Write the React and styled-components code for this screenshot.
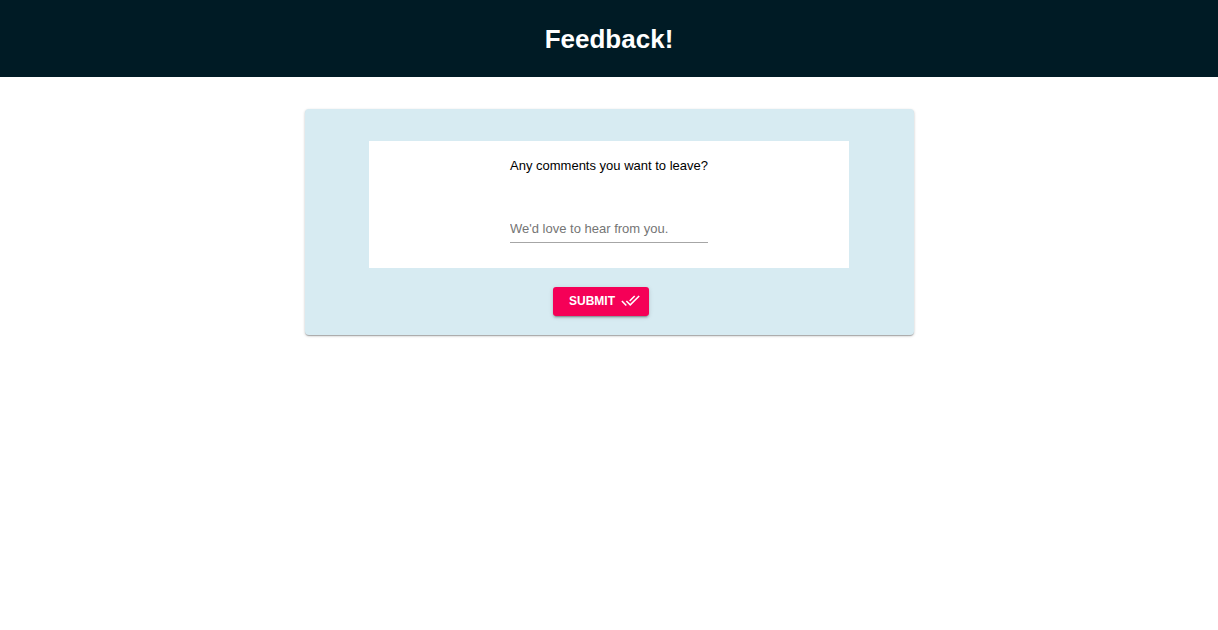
import React from "react";
import styled, { createGlobalStyle } from "styled-components";

const GlobalStyle = createGlobalStyle`
  body {
    margin: 0;
    background: #ffffff;
    color: #000000;
    font-family: "Liberation Sans", Arial, sans-serif;
    font-size: 13px;
  }
`;

const Header = styled.header`
  background: #001b25;
  color: #ffffff;
  padding: 23px 16px 22px;
  text-align: center;
`;

const Title = styled.h1`
  margin: 0;
  font-size: 26px;
  line-height: 32px;
  font-weight: 700;
`;

const Card = styled.form`
  box-sizing: border-box;
  display: flex;
  flex-direction: column;
  align-items: center;
  width: 50%;
  min-width: 280px;
  margin: 32px auto;
  padding: 32px 16px 19px;
  border-radius: 4px;
  background: #d7ebf2;
  box-shadow:
    0 1px 3px rgba(0, 0, 0, 0.2),
    0 1px 1px rgba(0, 0, 0, 0.14),
    0 2px 1px -1px rgba(0, 0, 0, 0.12);
`;

const Panel = styled.div`
  box-sizing: border-box;
  display: flex;
  flex-direction: column;
  align-items: center;
  width: 100%;
  max-width: 480px;
  padding: 16px 16px 25px;
  background: #ffffff;
`;

const Field = styled.div`
  display: flex;
  flex-direction: column;
`;

const Question = styled.label`
  margin-bottom: 40px;
  line-height: 18px;
`;

const CommentInput = styled.input`
  box-sizing: border-box;
  width: 100%;
  height: 28px;
  padding: 4px 0 5px;
  border: 0;
  border-bottom: 1px solid #a6a6a6;
  border-radius: 0;
  outline: 0;
  background: transparent;
  color: inherit;
  font: inherit;

  &::placeholder {
    color: #757575;
    opacity: 1;
  }
`;

const SubmitButton = styled.button`
  display: inline-flex;
  align-items: center;
  justify-content: center;
  gap: 6px;
  height: 29px;
  margin: 19px 16px 0 0;
  padding: 0 9px 2px 16px;
  border: 0;
  border-radius: 3px;
  background: #f50057;
  color: #ffffff;
  font: 700 12px/20px "Liberation Sans", Arial, sans-serif;
  text-transform: uppercase;
  cursor: pointer;
  box-shadow:
    0 3px 1px -2px rgba(0, 0, 0, 0.2),
    0 2px 2px rgba(0, 0, 0, 0.14),
    0 1px 5px rgba(0, 0, 0, 0.12);
`;

const CheckIcon = styled.svg`
  display: block;
  width: 19px;
  height: 19px;
  fill: currentColor;
`;

export default function App() {
  return (
    <>
      <GlobalStyle />
      <Header>
        <Title>Feedback!</Title>
      </Header>
      <main>
        <Card onSubmit={(event) => event.preventDefault()}>
          <Panel>
            <Field>
              <Question htmlFor="comments">Any comments you want to leave?</Question>
              <CommentInput
                id="comments"
                type="text"
                size={1}
                placeholder="We'd love to hear from you."
              />
            </Field>
          </Panel>
          <SubmitButton type="submit">
            Submit
            <CheckIcon viewBox="0 0 24 24" aria-hidden="true">
              <path d="M18 7l-1.41-1.41-6.34 6.34 1.41 1.41L18 7zm4.24-1.41L11.66 16.17 7.48 12l-1.41 1.41L11.66 19l12-12-1.42-1.41zM.41 13.41L6 19l1.41-1.41L1.83 12 .41 13.41z" />
            </CheckIcon>
          </SubmitButton>
        </Card>
      </main>
    </>
  );
}
